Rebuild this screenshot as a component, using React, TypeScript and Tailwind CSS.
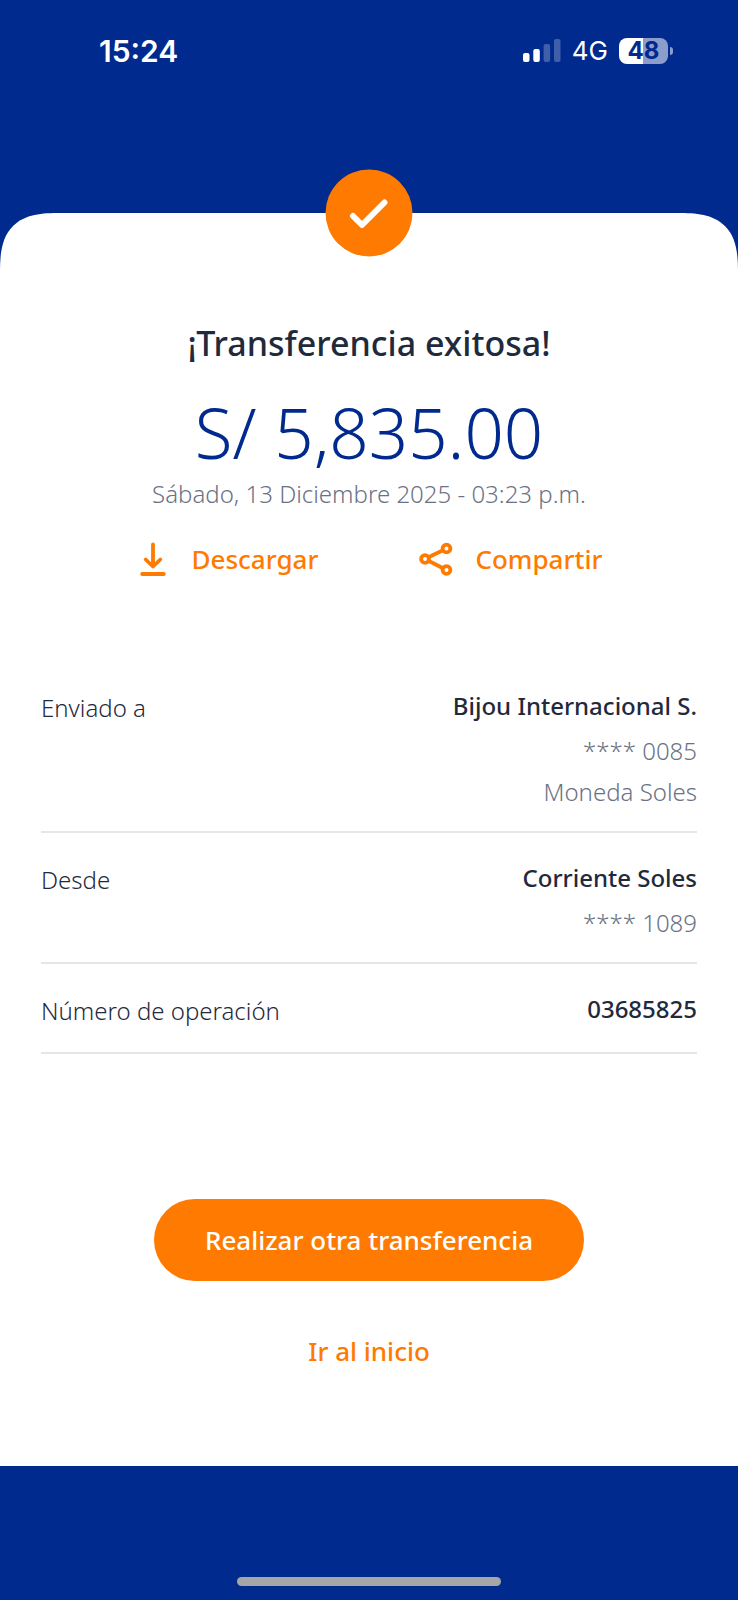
import React from 'react';

interface Detail {
  label: string;
  value: string;
  extra: string[];
}

const details: Detail[] = [
  { label: 'Enviado a', value: 'Bijou Internacional S.', extra: ['**** 0085', 'Moneda Soles'] },
  { label: 'Desde', value: 'Corriente Soles', extra: ['**** 1089'] },
  { label: 'Número de operación', value: '03685825', extra: [] },
];

function StatusBar() {
  return (
    <div className="flex items-center justify-between pt-[27px] pr-[65px] pl-[99px] font-['Inter',sans-serif] text-white">
      <span className="text-[30px] leading-12 font-semibold">15:24</span>
      <div className="flex items-center gap-[11px]">
        <svg width="38" height="24" viewBox="0 0 38 24" fill="#fff" aria-hidden="true">
          <rect x="0" y="14" width="6.500" height="9" rx="2" />
          <rect x="10.300" y="10" width="6.500" height="13" rx="2" />
          <rect x="20.600" y="5" width="6.500" height="18" rx="2" opacity="0.25" />
          <rect x="31" y="0" width="6.500" height="23" rx="2" opacity="0.25" />
        </svg>
        <span className="text-[26px] leading-12">4G</span>
        <div className="flex items-center gap-[2px]">
          <span className="flex h-[26px] w-[49px] items-center justify-center rounded-lg bg-linear-to-r from-white from-50% to-[#8c9ccb] to-50% text-[24px] font-bold text-[#002a8d]">
            48
          </span>
          <span className="h-2 w-[3px] rounded-r-full bg-[#8c9ccb]" />
        </div>
      </div>
    </div>
  );
}

function DownloadIcon() {
  return (
    <svg width="34" height="34" viewBox="0 0 34 34" fill="none" stroke="currentColor" strokeWidth="3.8" strokeLinecap="round" strokeLinejoin="round" aria-hidden="true">
      <path d="M17 2.500V24M9.700 17.500L17 24.500l7.300-7" />
      <path d="M6.200 32h21.600" />
    </svg>
  );
}

function ShareIcon() {
  return (
    <svg width="34" height="34" viewBox="0 0 34 34" fill="none" stroke="currentColor" strokeWidth="3.8" aria-hidden="true">
      <circle cx="27.500" cy="6.500" r="3.900" />
      <circle cx="6" cy="17" r="3.900" />
      <circle cx="27.500" cy="28" r="3.900" />
      <path d="M9.500 15.200L24 8.300M9.500 18.800L24 26.200" />
    </svg>
  );
}

export default function App() {
  return (
    <div className="flex min-h-screen flex-col bg-[#002a8d] font-['Noto_Sans','Open_Sans',sans-serif]">
      <StatusBar />

      <main className="relative mt-[138px] flex flex-col items-center rounded-t-[60px] bg-white px-[41px] pt-[106px] pb-[91px] [corner-shape:superellipse(1.5)]">
        {/* Success badge over the card edge */}
        <div className="absolute top-0 left-1/2 flex size-[87px] -translate-x-1/2 -translate-y-1/2 items-center justify-center rounded-full bg-[#ff7a00]">
          <svg width="40" height="30" viewBox="0 0 40 30" fill="none" stroke="#fff" strokeWidth="6" strokeLinecap="round" strokeLinejoin="round" aria-hidden="true">
            <path d="M3.500 17.500L12.500 26.500L35 4" />
          </svg>
        </div>

        <h1 className="text-[34px] leading-12 font-medium text-[#1f2a3d]">¡Transferencia exitosa!</h1>
        <p className="mt-[25px] text-[69px] leading-20 font-light text-[#002a8d]">S/ 5,835.00</p>
        <p className="mt-[2px] text-[24px] leading-10 font-light text-[#6b7285]">Sábado, 13 Diciembre 2025 - 03:23 p.m.</p>

        <div className="mt-[21px] flex gap-[101px] text-[26px] leading-12 font-medium text-[#ff7a00]">
          <button type="button" className="flex items-center gap-[22px]">
            <DownloadIcon />
            Descargar
          </button>
          <button type="button" className="flex items-center gap-[22px]">
            <ShareIcon />
            Compartir
          </button>
        </div>

        <dl className="mt-[78px] w-full text-[24px] text-[#1f2a3d]">
          {details.map((item) => (
            <div key={item.label} className="flex items-start justify-between border-b-2 border-[#e6e6e8] pt-[21px] pb-[19px]">
              <dt className="pt-1 leading-11 font-light">{item.label}</dt>
              <dd className="text-right">
                <p className="leading-12 font-medium">{item.value}</p>
                {item.extra.map((line) => (
                  <p key={line} className="leading-[41px] font-light text-[#6b7285]">
                    {line}
                  </p>
                ))}
              </dd>
            </div>
          ))}
        </dl>

        <button type="button" className="mt-[145px] h-[82px] rounded-[41px] bg-[#ff7a00] px-[51px] text-[26px] font-medium text-white">
          Realizar otra transferencia
        </button>
        <a href="#inicio" className="mt-[46px] text-[26px] leading-12 font-medium text-[#ff7a00]">
          Ir al inicio
        </a>
      </main>

      <footer className="mt-auto flex justify-center pb-[14px]">
        <div className="h-[9px] w-[264px] rounded-full bg-[#a6a6a6]" />
      </footer>
    </div>
  );
}
